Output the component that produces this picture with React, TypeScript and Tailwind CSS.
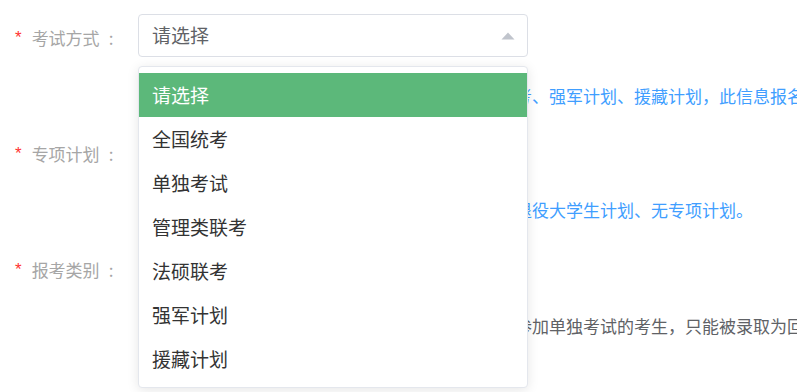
import React from 'react'

const options = ['请选择', '全国统考', '单独考试', '管理类联考', '法硕联考', '强军计划', '援藏计划']

const cjk = "font-['Microsoft_YaHei','Noto_Sans_CJK_SC',sans-serif]"

const Label = ({ text }: { text: string }) => (
  <div className={`w-[123px] shrink-0 flex items-center h-[43px] pt-[5px] text-[17px] text-[#a6a6a6] ${cjk}`}>
    <span className="text-[#f33] text-[17px] mr-[10px] font-['Liberation_Sans',sans-serif]">*</span>
    <span>{text}</span>
    <span className="ml-[9px]">:</span>
  </div>
)

const Select = ({ open }: { open?: boolean }) => (
  <div className="relative">
    <div className="w-[390px] h-[43px] rounded-[4px] border border-[#dcdfe6] bg-white flex items-center justify-between pl-[13px] pr-[12px]">
      <span className={`text-[19px] text-[#606266] ${cjk}`}>请选择</span>
      <svg width="14" height="8" viewBox="0 0 14 8">
        <path d="M0.5 7.5 L7 0.5 L13.5 7.5 Z" fill="#c0c4cc" />
      </svg>
    </div>
    {open && (
      <div className="absolute left-0 top-[52px] z-10 w-[390px] rounded-[4px] border border-[#e4e7ed] bg-white py-[6px] shadow-[0_2px_12px_0_rgba(0,0,0,0.1)]">
        {options.map((o, i) => (
          <div
            key={o}
            className={`h-[44px] flex items-center pl-[13px] text-[19px] ${cjk} ${i === 0 ? 'bg-[#5cb87a] text-white' : 'text-[#333]'}`}
          >
            {o}
          </div>
        ))}
      </div>
    )}
  </div>
)

const Row = ({ label, hint, blue, open, first }: { label: string; hint: string; blue?: boolean; open?: boolean; first?: boolean }) => (
  <div className="flex">
    <Label text={label} />
    <div className="flex flex-col">
      <Select open={open} />
      <p className={`${first ? 'mt-[27px]' : 'mt-[25px]'} whitespace-nowrap pl-[3px] text-[17px] leading-[24px] ${cjk} ${blue ? 'text-[#409eff]' : 'text-[#606266]'}`}>
        {hint}
      </p>
    </div>
  </div>
)

export default function App() {
  return (
    <div className="w-[797px] h-[392px] overflow-hidden bg-white pl-[15px] pt-[14px]">
      <div className="flex flex-col">
        <Row first open blue label="考试方式" hint="包括：全国统考、单独考试、管理类联考、法硕联考、强军计划、援藏计划，此信息报名后不可修改。" />
        <div className="h-[22px]" />
        <Row blue label="专项计划" hint="专项计划类型有：少数民族高层次骨干人才计划、退役大学生计划、无专项计划。" />
        <div className="h-[24px]" />
        <Row label="报考类别" hint="报考类别分为定向就业和非定向就业两种类型；凡参加单独考试的考生，只能被录取为回定向就业单位工作的考生。" />
      </div>
    </div>
  )
}
